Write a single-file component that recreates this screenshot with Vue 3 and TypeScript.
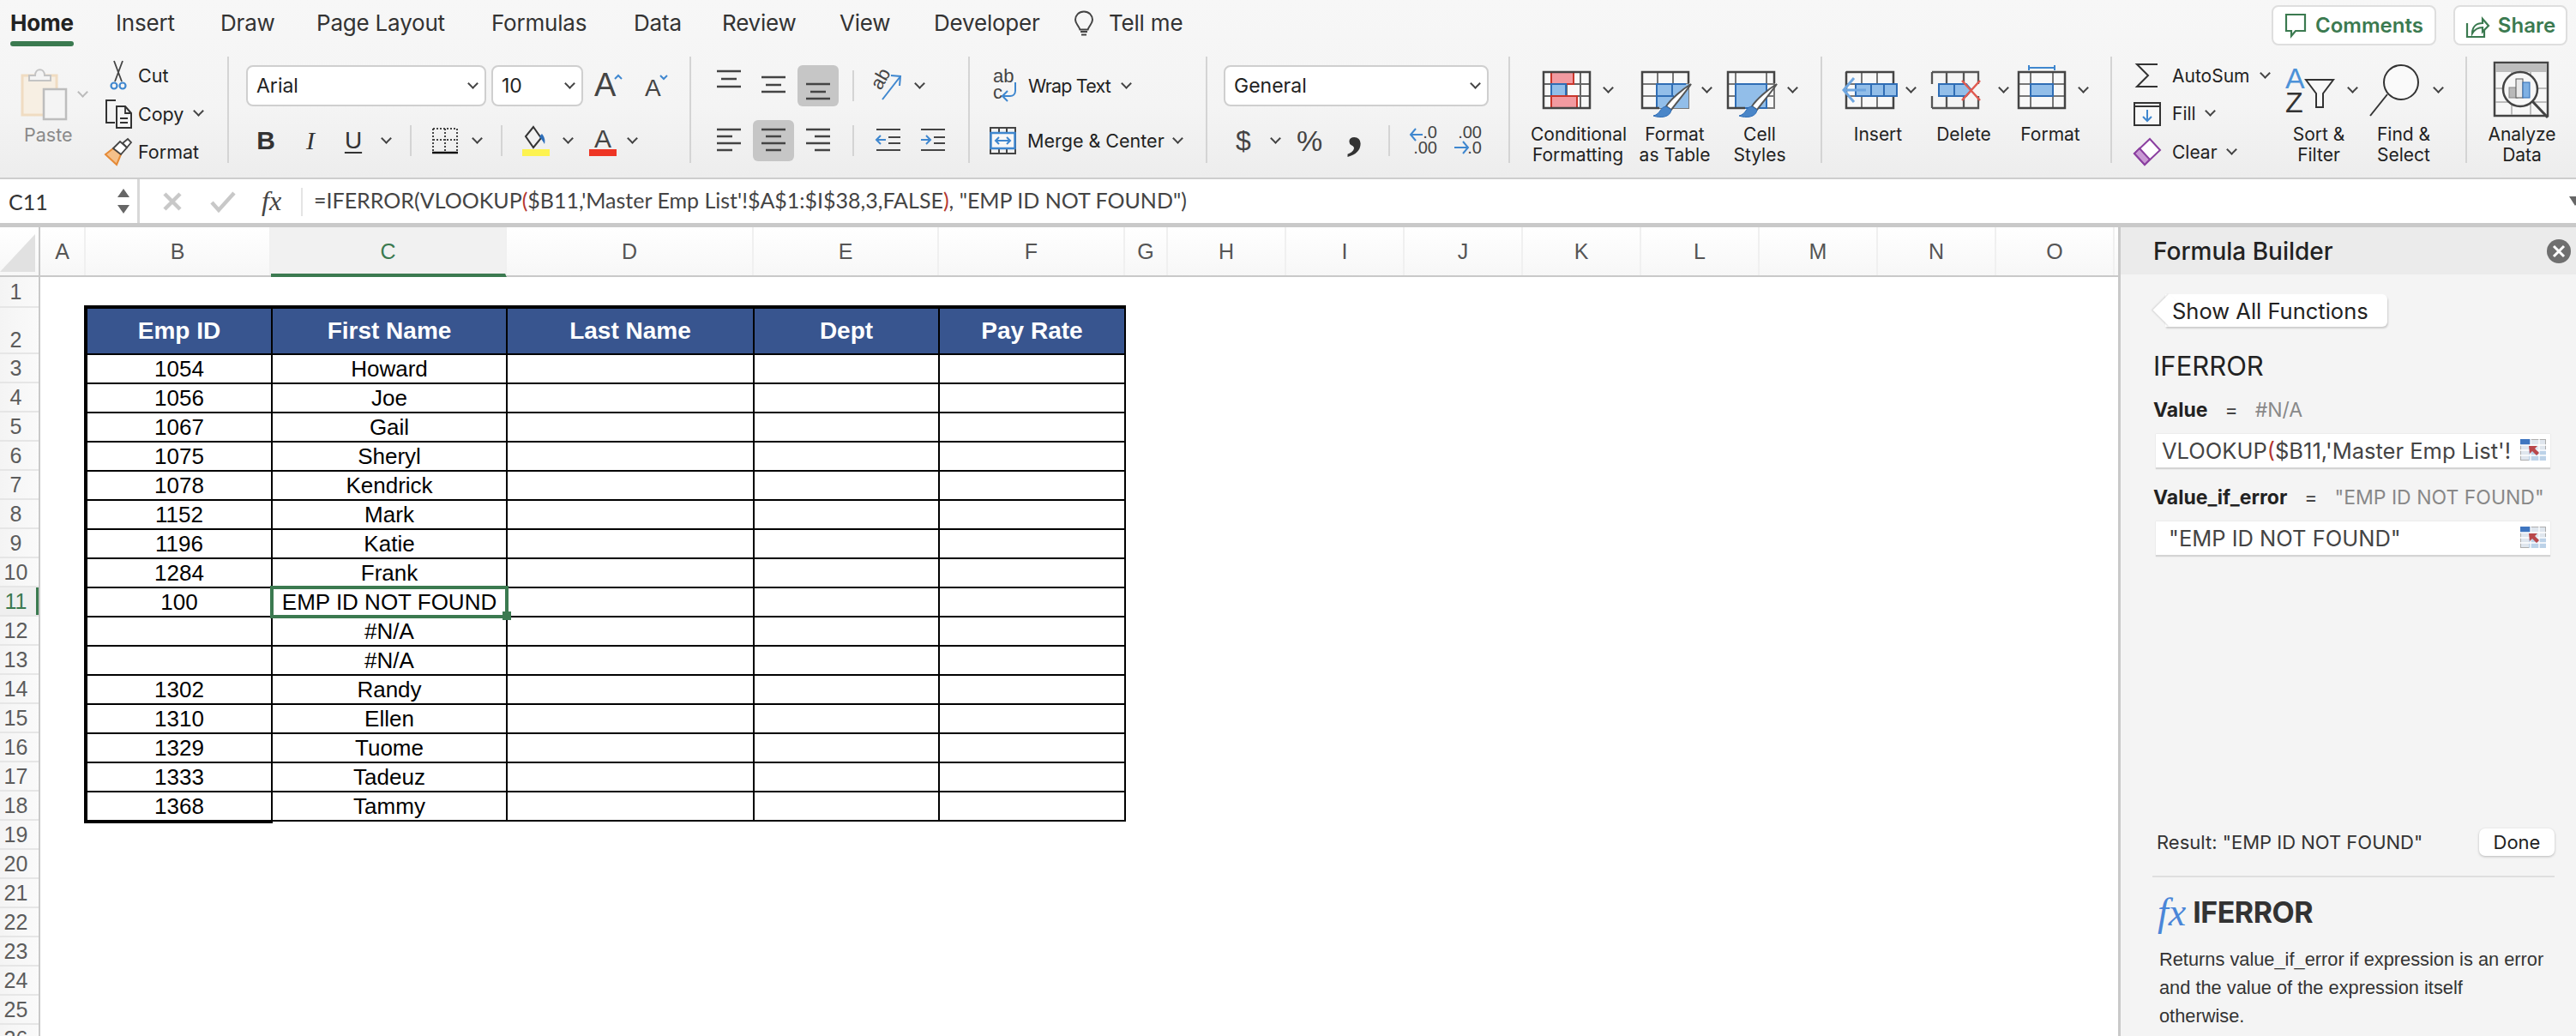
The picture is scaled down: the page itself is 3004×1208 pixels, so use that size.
<script setup lang="ts">
const tabs = ["Home", "Insert", "Draw", "Page Layout", "Formulas", "Data", "Review", "View", "Developer"];

const columns = [
  { name: "A", width: 53 },
  { name: "B", width: 216 },
  { name: "C", width: 275, active: true },
  { name: "D", width: 288 },
  { name: "E", width: 216 },
  { name: "F", width: 217 },
  { name: "G", width: 50 },
  { name: "H", width: 138 },
  { name: "I", width: 138 },
  { name: "J", width: 138 },
  { name: "K", width: 138 },
  { name: "L", width: 138 },
  { name: "M", width: 138 },
  { name: "N", width: 138 },
  { name: "O", width: 138 },
];

const rowNumbers = Array.from({ length: 26 }, (_, i) => i + 1);

const headers = ["Emp ID", "First Name", "Last Name", "Dept", "Pay Rate"];
const employees: [string, string][] = [
  ["1054", "Howard"],
  ["1056", "Joe"],
  ["1067", "Gail"],
  ["1075", "Sheryl"],
  ["1078", "Kendrick"],
  ["1152", "Mark"],
  ["1196", "Katie"],
  ["1284", "Frank"],
  ["100", "EMP ID NOT FOUND"],
  ["", "#N/A"],
  ["", "#N/A"],
  ["1302", "Randy"],
  ["1310", "Ellen"],
  ["1329", "Tuome"],
  ["1333", "Tadeuz"],
  ["1368", "Tammy"],
];
</script>

<template>
  <div class="app">
    <header class="ribbon">
      <div class="tabs">
        <div class="tab-grid">
          <div v-for="(t, i) in tabs" :key="t" class="tab">
            <span class="tab-label" :class="{ current: i === 0 }">{{ t }}</span>
          </div>
          <svg class="bulb" width="24" height="30" viewBox="0 0 24 30">
            <path d="M12 1.500c-6 0-10 4.400-10 9.600 0 4.400 4 6.900 5.400 11.400h9.200C18 18 22 15.500 22 11.100 22 5.900 18 1.500 12 1.500z" fill="none" stroke="#444" stroke-width="2" />
            <path d="M8 25h8M9 28.500h6" stroke="#444" stroke-width="2" fill="none" />
          </svg>
          <div class="tab"><span class="tab-label">Tell me</span></div>
        </div>
        <div class="top-actions">
          <button class="top-btn comments">
            <svg width="26" height="30" viewBox="0 0 26 30">
              <path d="M2 2h22v19H13l-5 6v-6H2z" fill="none" stroke="#3b7a50" stroke-width="2.200" />
            </svg>
            Comments
          </button>
          <button class="top-btn share">
            <svg width="28" height="30" viewBox="0 0 28 30">
              <path d="M2 12v16h20v-8" fill="none" stroke="#3b7a50" stroke-width="2.200" />
              <path d="M8 24c0-8 5-12 12-12V7l7 8-7 7v-5c-6 0-9 2-12 7z" fill="none" stroke="#3b7a50" stroke-width="2.200" />
            </svg>
            Share
          </button>
        </div>
      </div>

      <div class="groups">
        <!-- clipboard -->
        <section class="group g-clip">
          <div class="paste">
            <div class="paste-top">
              <svg width="56" height="60" viewBox="0 0 56 60">
                <rect x="2" y="8" width="40" height="46" fill="#f7efe3" stroke="#f0dcc2" stroke-width="3" />
                <path d="M10 14V8h7c0-9 11-9 11 0h7v6z" fill="#f4f4f4" stroke="#c4c4c4" stroke-width="2" />
                <rect x="27" y="24" width="26" height="35" fill="#f4f4f4" stroke="#bdbdbd" stroke-width="2.500" />
              </svg>
              <span class="caret faded"></span>
            </div>
            <div class="paste-label">Paste</div>
          </div>
          <div class="clip-list">
            <div class="clip-row">
              <svg width="32" height="36" viewBox="0 0 32 36">
                <path d="M11 1l9 24M21 1l-9 24" stroke="#444" stroke-width="1.800" fill="none" />
                <circle cx="11" cy="30" r="3.500" fill="none" stroke="#3f87cf" stroke-width="2.200" />
                <circle cx="21" cy="30" r="3.500" fill="none" stroke="#3f87cf" stroke-width="2.200" />
              </svg>
              <span>Cut</span>
            </div>
            <div class="clip-row">
              <svg width="32" height="34" viewBox="0 0 32 34">
                <path d="M13 1H2v26h10" fill="none" stroke="#333" stroke-width="2" />
                <path d="M14 8h10l7 8v17H14z" fill="#f6f6f6" stroke="#333" stroke-width="2" />
                <path d="M24 8v8h7M18 22h9M18 27h9" fill="none" stroke="#333" stroke-width="1.800" />
              </svg>
              <span>Copy</span>
              <span class="caret copy-caret"></span>
            </div>
            <div class="clip-row">
              <svg width="32" height="32" viewBox="0 0 32 32">
                <path d="M10 12L1 19l13 12 5-12z" fill="#f4c08a" stroke="#e58a37" stroke-width="2" />
                <path d="M10 12l9 7 7-8-8-7z" fill="#fff" stroke="#444" stroke-width="1.800" />
                <path d="M21 6l6-5 4 4-5 6z" fill="#fff" stroke="#444" stroke-width="1.800" />
              </svg>
              <span>Format</span>
            </div>
          </div>
        </section>
        <i class="sep"></i>

        <!-- font -->
        <section class="group g-font">
          <div class="row-a font-top">
            <div class="select font-name">Arial<span class="caret"></span></div>
            <div class="select font-size">10<span class="caret"></span></div>
            <svg class="grow" width="34" height="44" viewBox="0 0 34 44">
              <text x="0" y="34" class="svg-a big">A</text>
              <path d="M24 14l4-4 4 4" fill="none" stroke="#3f87cf" stroke-width="2" />
            </svg>
            <svg class="shrink" width="30" height="44" viewBox="0 0 30 44">
              <text x="0" y="34" class="svg-a">A</text>
              <path d="M18 10l4 4 4-4" fill="none" stroke="#3f87cf" stroke-width="2" />
            </svg>
          </div>
          <div class="row-b font-bottom">
            <b class="fmt-b">B</b>
            <i class="fmt-i">I</i>
            <u class="fmt-u">U</u>
            <span class="caret"></span>
            <i class="mini-sep"></i>
            <svg width="32" height="32" viewBox="0 0 32 32">
              <path d="M2 2h28M2 2v26M30 2v26M16 2v26M2 15h28" stroke="#444" stroke-width="2" stroke-dasharray="2 2" fill="none" />
              <path d="M1 30h30" stroke="#111" stroke-width="2.500" />
            </svg>
            <span class="caret"></span>
            <i class="mini-sep"></i>
            <svg width="34" height="36" viewBox="0 0 34 36">
              <path d="M14 2l9 13-9 11-9-13z" fill="none" stroke="#333" stroke-width="2" />
              <path d="M24 10c3 4 4 7 3 12-2-4-5-7-6-9z" fill="#2f6fb8" />
              <rect x="1" y="28" width="32" height="8" fill="#fdf350" />
            </svg>
            <span class="caret"></span>
            <svg width="34" height="36" viewBox="0 0 34 36">
              <text x="17" y="26" text-anchor="middle" class="svg-a color-a">A</text>
              <rect x="1" y="28" width="32" height="8" fill="#ee3524" />
            </svg>
            <span class="caret"></span>
          </div>
        </section>
        <i class="sep"></i>

        <!-- alignment -->
        <section class="group g-align">
          <div class="row-a align-grid">
            <svg class="lines" width="28" height="48" viewBox="0 0 28 48"><path d="M0 7h28M5 16h18M0 25h28" /></svg>
            <svg class="lines" width="28" height="48" viewBox="0 0 28 48"><path d="M0 14h28M5 23h18M0 31h28" /></svg>
            <div class="pressed"><svg class="lines" width="28" height="48" viewBox="0 0 28 48"><path d="M0 22h28M5 31h18M0 39h28" /></svg></div>
            <i class="mini-sep"></i>
            <svg width="36" height="44" viewBox="0 0 36 44">
              <text x="3" y="24" transform="rotate(-60 10 20)" class="svg-ab">ab</text>
              <path d="M12 38L33 11M22 10l11 1-1 11" fill="none" stroke="#3f87cf" stroke-width="2" />
            </svg>
            <span class="caret orient-caret"></span>
          </div>
          <div class="row-b align-grid">
            <svg class="lines" width="28" height="48" viewBox="0 0 28 48"><path d="M0 11h28M0 19h18M0 27h28M0 35h18" /></svg>
            <div class="pressed"><svg class="lines" width="28" height="48" viewBox="0 0 28 48"><path d="M0 11h28M5 19h18M0 27h28M5 35h18" /></svg></div>
            <svg class="lines" width="28" height="48" viewBox="0 0 28 48"><path d="M0 11h28M10 19h18M0 27h28M10 35h18" /></svg>
            <i class="mini-sep"></i>
            <svg width="30" height="48" viewBox="0 0 30 48">
              <path d="M2 11h28M16 20h14M16 27h14M2 35h28" stroke="#444" stroke-width="2" fill="none" />
              <path d="M13 23H2M7 18l-5 5 5 5" stroke="#3f87cf" stroke-width="2" fill="none" />
            </svg>
            <svg width="30" height="48" viewBox="0 0 30 48">
              <path d="M1 11h28M16 20h13M16 27h13M1 35h28" stroke="#444" stroke-width="2" fill="none" />
              <path d="M1 23h11M7 18l5 5-5 5" stroke="#3f87cf" stroke-width="2" fill="none" />
            </svg>
          </div>
        </section>
        <i class="sep"></i>

        <!-- wrap and merge -->
        <section class="group g-wrap">
          <div class="row-a wrap-row">
            <svg width="30" height="40" viewBox="0 0 30 40">
              <text x="0" y="16" class="svg-ab">ab</text>
              <text x="0" y="35" class="svg-ab">c</text>
              <path d="M26 16v10c0 4-3 6-6 6h-8M17 26l-6 6 6 6" fill="none" stroke="#3f87cf" stroke-width="2" />
            </svg>
            <span class="wrap-label">Wrap Text</span>
            <span class="caret"></span>
          </div>
          <div class="row-b merge-row">
            <svg width="31" height="32" viewBox="0 0 31 32">
              <path d="M1 1h29v30H1zM11 1v6M20 1v6M11 25v6M20 25v6" fill="none" stroke="#444" stroke-width="2" />
              <rect x="1.500" y="7" width="28" height="18" fill="#f7f7f7" stroke="#3f87cf" stroke-width="2.500" />
              <path d="M7 16h17M11 12l-4 4 4 4M20 12l4 4-4 4" fill="none" stroke="#3f87cf" stroke-width="2" />
            </svg>
            <span class="merge-label">Merge &amp; Center</span>
            <span class="caret"></span>
          </div>
        </section>
        <i class="sep"></i>

        <!-- number -->
        <section class="group g-number">
          <div class="row-a">
            <div class="select number-format">General<span class="caret"></span></div>
          </div>
          <div class="row-b number-grid">
            <span class="num-sym">$</span>
            <span class="caret"></span>
            <span class="num-sym pct">%</span>
            <span class="num-comma">,</span>
            <i class="mini-sep"></i>
            <svg width="34" height="36" viewBox="0 0 34 36">
              <text x="33" y="15" text-anchor="end" class="svg-dec">.0</text>
              <text x="33" y="33" text-anchor="end" class="svg-dec">.00</text>
              <path d="M16 11H2M8 4l-6 7 6 7" fill="none" stroke="#3f87cf" stroke-width="2" />
            </svg>
            <svg width="34" height="36" viewBox="0 0 34 36">
              <text x="33" y="15" text-anchor="end" class="svg-dec">.00</text>
              <text x="33" y="33" text-anchor="end" class="svg-dec">.0</text>
              <path d="M1 26h16M11 19l6 7-6 7" fill="none" stroke="#3f87cf" stroke-width="2" />
            </svg>
          </div>
        </section>
        <i class="sep"></i>

        <!-- styles -->
        <section class="group g-styles">
          <div class="big-btn b-cf">
            <div class="big-top">
              <svg class="big-icon" width="56" height="54" viewBox="0 0 56 54">
                <path d="M1 1h54v42H1zM44 1v42M1 15h54M1 29h54M28 1v42" fill="#f8f8f8" stroke="#666" stroke-width="2" />
                <rect x="10" y="1" width="26" height="14" fill="#f29aa0" stroke="#c9362b" stroke-width="2" />
                <rect x="10" y="15" width="17" height="14" fill="#92bee9" stroke="#2f6db5" stroke-width="2" />
                <rect x="10" y="29" width="30" height="14" fill="#f29aa0" stroke="#c9362b" stroke-width="2" />
                <path d="M1 1h54v42H1z" fill="none" stroke="#444" stroke-width="2.500" />
              </svg>
              <span class="caret"></span>
            </div>
            <div class="big-label">Conditional<br />Formatting</div>
          </div>
          <div class="big-btn b-ft">
            <div class="big-top">
              <svg class="big-icon" width="60" height="54" viewBox="0 0 60 54">
                <path d="M1 1h54v42H1zM19 1v42M37 1v42M1 15h54M1 29h54" fill="#f8f8f8" stroke="#777" stroke-width="2" />
                <rect x="18" y="15" width="37" height="28" fill="#92bee9" />
                <path d="M18 43V15h34M36 15v14M18 29h20" fill="none" stroke="#2f6db5" stroke-width="2" />
                <path d="M55 14V1H1v42h20" fill="none" stroke="#444" stroke-width="2.500" />
                <path d="M58 15C52 24 40 38 35 45l-6-4C34 33 48 21 58 15z" fill="#fff" stroke="#555" stroke-width="2" />
                <path d="M29 41c-8 1-6 9-15 11 8 3 20 2 21-7z" fill="#4a86c8" stroke="#2f6db5" stroke-width="1" />
              </svg>
              <span class="caret narrow-caret"></span>
            </div>
            <div class="big-label">Format<br />as Table</div>
          </div>
          <div class="big-btn b-cs">
            <div class="big-top">
              <svg class="big-icon" width="60" height="54" viewBox="0 0 60 54">
                <path d="M1 1h54v42H1zM10 1v42M46 1v42M1 15h54M1 29h54" fill="#f8f8f8" stroke="#777" stroke-width="2" />
                <rect x="10" y="15" width="36" height="28" fill="#92bee9" stroke="#2f6db5" stroke-width="2" />
                <path d="M55 14V1H1v42h20" fill="none" stroke="#444" stroke-width="2.500" />
                <path d="M58 15C52 24 40 38 35 45l-6-4C34 33 48 21 58 15z" fill="#fff" stroke="#555" stroke-width="2" />
                <path d="M29 41c-8 1-6 9-15 11 8 3 20 2 21-7z" fill="#4a86c8" stroke="#2f6db5" stroke-width="1" />
              </svg>
              <span class="caret narrow-caret"></span>
            </div>
            <div class="big-label">Cell<br />Styles</div>
          </div>
        </section>
        <i class="sep"></i>

        <!-- cells -->
        <section class="group g-cells">
          <div class="big-btn b-ins">
            <div class="big-top">
              <svg class="big-icon" width="66" height="44" viewBox="0 0 66 44">
                <path d="M5 1h55v42H5zM23 1v42M41 1v42M5 15h55M5 29h55" fill="#f8f8f8" stroke="#777" stroke-width="2" />
                <path d="M5 1h55v14M5 1v42h55V29" fill="none" stroke="#444" stroke-width="2.500" />
                <rect x="16" y="15" width="48" height="14" fill="#92bee9" stroke="#2f6db5" stroke-width="2" />
                <path d="M34 15v14M49 15v14" stroke="#2f6db5" stroke-width="2" />
                <path d="M28 22H2M14 8L2 22l12 14" fill="none" stroke="#6ea6e0" stroke-width="3" />
              </svg>
              <span class="caret"></span>
            </div>
            <div class="big-label">Insert</div>
          </div>
          <div class="big-btn b-del">
            <div class="big-top">
              <svg class="big-icon" width="60" height="44" viewBox="0 0 60 44">
                <path d="M1 1h54v14M1 43h54V29M1 1v14M1 29v14M18 1v14M38 1v14M18 29v14M38 29v14" fill="none" stroke="#555" stroke-width="2.300" />
                <path d="M9 15h32l6 7-6 7H9z" fill="#92bee9" stroke="#2f6db5" stroke-width="2" />
                <path d="M27 15v14" stroke="#2f6db5" stroke-width="2" />
                <path d="M36 11l21 23M57 11L36 34" stroke="#e15a50" stroke-width="2.500" />
              </svg>
              <span class="caret narrow-caret"></span>
            </div>
            <div class="big-label">Delete</div>
          </div>
          <div class="big-btn b-fmt">
            <div class="big-top">
              <svg class="big-icon up" width="56" height="54" viewBox="0 0 56 54">
                <path d="M13 3v6M43 3v6M13 6h30" stroke="#3f87cf" stroke-width="2" fill="none" />
                <path d="M1 11h54v42H1zM15 11v42M41 11v42M1 25h54M1 39h54" fill="#f8f8f8" stroke="#777" stroke-width="2" />
                <path d="M1 11h54v42H1z" fill="none" stroke="#444" stroke-width="2.500" />
                <rect x="15" y="25" width="26" height="14" fill="#92bee9" stroke="#2f6db5" stroke-width="2" />
              </svg>
              <span class="caret"></span>
            </div>
            <div class="big-label">Format</div>
          </div>
        </section>
        <i class="sep"></i>

        <!-- editing -->
        <section class="group g-edit">
          <div class="edit-list">
            <div class="edit-row">
              <svg width="32" height="30" viewBox="0 0 32 30">
                <path d="M28 2H4l13 13L4 28h24" fill="none" stroke="#333" stroke-width="2" />
              </svg>
              <span class="edit-text autosum">AutoSum</span>
              <span class="caret"></span>
            </div>
            <div class="edit-row">
              <svg width="32" height="28" viewBox="0 0 32 28">
                <path d="M1 1h30v26H1zM1 5h30" fill="#f8f8f8" stroke="#333" stroke-width="2" />
                <path d="M16 9v13M11 17l5 5 5-5" fill="none" stroke="#3f87cf" stroke-width="2" />
              </svg>
              <span class="edit-text fill">Fill</span>
              <span class="caret"></span>
            </div>
            <div class="edit-row">
              <svg width="32" height="32" viewBox="0 0 32 32">
                <path d="M19 1l12 13-18 17L1 18z" fill="#fff" stroke="#8b3fa0" stroke-width="2" />
                <path d="M7 12l12 13-6 6L1 18z" fill="#c99ad4" stroke="#8b3fa0" stroke-width="2" />
              </svg>
              <span class="edit-text clear">Clear</span>
              <span class="caret"></span>
            </div>
          </div>
          <div class="big-btn b-sort">
            <div class="big-top">
              <svg class="big-icon sort-icon" width="58" height="56" viewBox="0 0 58 56">
                <text x="0" y="26" class="svg-sort blue">A</text>
                <text x="0" y="54" class="svg-sort">Z</text>
                <path d="M24 16h32L44 32v16h-8V32z" fill="#f8f8f8" stroke="#333" stroke-width="2" />
              </svg>
              <span class="caret"></span>
            </div>
            <div class="big-label">Sort &amp;<br />Filter</div>
          </div>
          <div class="big-btn b-find">
            <div class="big-top">
              <svg class="big-icon find-icon" width="62" height="62" viewBox="0 0 62 62">
                <circle cx="38" cy="21" r="20" fill="#fafafa" stroke="#333" stroke-width="2" />
                <path d="M22 35L2 60" stroke="#333" stroke-width="2" />
              </svg>
              <span class="caret"></span>
            </div>
            <div class="big-label">Find &amp;<br />Select</div>
          </div>
        </section>
        <i class="sep"></i>

        <section class="group g-analyze">
          <div class="big-btn b-an">
            <div class="big-top">
              <svg class="big-icon analyze-icon" width="66" height="66" viewBox="0 0 66 66">
                <rect x="1" y="1" width="62" height="62" fill="#f7f7f7" stroke="#444" stroke-width="2.500" />
                <rect x="2" y="2" width="60" height="10" fill="#bdbdbd" />
                <path d="M2 31h60M2 47h60M21 12v50M43 12v50" stroke="#aaa" stroke-width="1.500" />
                <circle cx="31" cy="32" r="20" fill="#f7f7f7" stroke="#444" stroke-width="2.500" />
                <rect x="18" y="30" width="10" height="12" fill="#b9b9b9" stroke="#888" />
                <rect x="26" y="20" width="8" height="22" fill="#e9e9e9" stroke="#555" />
                <rect x="34" y="24" width="8" height="18" fill="#7fb0e3" stroke="#2f6db5" />
                <path d="M45 46l18 19" stroke="#444" stroke-width="3" />
              </svg>
            </div>
            <div class="big-label">Analyze<br />Data</div>
          </div>
        </section>
      </div>
    </header>

    <div class="formula-bar">
      <div class="name-box">
        <span>C11</span>
        <span class="spin"><i class="up-arrow"></i><i class="down-arrow"></i></span>
      </div>
      <div class="fx-tools">
        <svg width="24" height="24" viewBox="0 0 24 24"><path d="M3 3l18 18M21 3L3 21" stroke="#c8c8c8" stroke-width="4.500" /></svg>
        <svg width="30" height="24" viewBox="0 0 30 24"><path d="M2 13l8 9L28 2" fill="none" stroke="#c8c8c8" stroke-width="4.500" /></svg>
        <span class="fx">fx</span>
      </div>
      <div class="formula-text">=IFERROR(VLOOKUP<span class="paren">(</span>$B11,'Master Emp List'!$A$1:$I$38,3,FALSE<span class="paren">)</span>, "EMP ID NOT FOUND")</div>
      <i class="expand"></i>
    </div>

    <main class="workspace">
      <div class="sheet">
        <div class="col-heads">
          <div class="corner"><i></i></div>
          <div
            v-for="c in columns"
            :key="c.name"
            class="col-head"
            :class="{ active: c.active }"
            :style="{ width: c.width + 'px' }"
          >{{ c.name }}</div>
        </div>
        <div class="sheet-body">
          <div class="row-heads">
            <div
              v-for="n in rowNumbers"
              :key="n"
              class="row-head"
              :class="{ tall: n === 2, short: n === 1, active: n === 11 }"
            >{{ n }}</div>
          </div>
          <div class="cells">
            <div class="table">
              <div v-for="h in headers" :key="h" class="th">{{ h }}</div>
              <template v-for="(e, i) in employees" :key="i">
                <div class="td" :class="{ last: i === employees.length - 1 }">{{ e[0] }}</div>
                <div class="td" :class="{ selected: i === 8 }">
                  {{ e[1] }}
                  <i v-if="i === 8" class="fill-handle"></i>
                </div>
                <div class="td"></div>
                <div class="td"></div>
                <div class="td"></div>
              </template>
            </div>
          </div>
        </div>
      </div>

      <aside class="panel">
        <div class="panel-head">
          <span>Formula Builder</span>
          <span class="close">
            <svg width="16" height="16" viewBox="0 0 16 16"><path d="M2 2l12 12M14 2L2 14" stroke="#fff" stroke-width="3" /></svg>
          </span>
        </div>
        <div class="panel-body">
          <button class="back-btn">Show All Functions</button>
          <div class="fn-name">IFERROR</div>
          <div class="arg-row"><b>Value</b><span class="eq">=</span><span class="arg-val">#N/A</span></div>
          <div class="arg-input">
            <span class="arg-text">VLOOKUP<span class="paren">(</span>$B11,'Master Emp List'!</span>
            <svg class="range" width="30" height="25" viewBox="0 0 30 25">
              <rect x="0.500" y="0.500" width="29" height="24" fill="#dfe6ee" stroke="#aeaeae" />
              <rect x="10" y="12" width="20" height="13" fill="#bcd2e8" />
              <rect width="12" height="7" fill="#3f76c0" />
              <path d="M0 7h30M0 13h30M0 19h30M12 0v25M22 0v25" stroke="#fff" stroke-width="1.300" />
              <path d="M10 8h10l-3 3 5 5-3 3-5-5-3 3z" fill="#b9474a" />
            </svg>
          </div>
          <div class="arg-row second"><b>Value_if_error</b><span class="eq">=</span><span class="arg-val">"EMP ID NOT FOUND"</span></div>
          <div class="arg-input">
            <span class="arg-text indent">"EMP ID NOT FOUND"</span>
            <svg class="range" width="30" height="25" viewBox="0 0 30 25">
              <rect x="0.500" y="0.500" width="29" height="24" fill="#dfe6ee" stroke="#aeaeae" />
              <rect x="10" y="12" width="20" height="13" fill="#bcd2e8" />
              <rect width="12" height="7" fill="#3f76c0" />
              <path d="M0 7h30M0 13h30M0 19h30M12 0v25M22 0v25" stroke="#fff" stroke-width="1.300" />
              <path d="M10 8h10l-3 3 5 5-3 3-5-5-3 3z" fill="#b9474a" />
            </svg>
          </div>
          <div class="result-row">
            <span>Result: "EMP ID NOT FOUND"</span>
            <button class="done">Done</button>
          </div>
          <div class="divider"></div>
          <div class="help-title"><span class="help-fx">fx</span><b>IFERROR</b></div>
          <p class="help-text">Returns value_if_error if expression is an error and the value of the expression itself otherwise.</p>
        </div>
      </aside>
    </main>
  </div>
</template>

<style>
html,
body {
  margin: 0;
  overflow: hidden;
  background: #fff;
}
</style>

<style scoped>
* {
  box-sizing: border-box;
}
i {
  font-style: normal;
}
svg {
  overflow: visible;
}
button {
  font: inherit;
  padding: 0;
  cursor: default;
}
.app {
  width: 3004px;
  height: 1208px;
  overflow: hidden;
  font-family: Inter, "Liberation Sans", sans-serif;
  color: #222;
  background: #fff;
}

/* ribbon */
.ribbon {
  height: 207px;
  background: linear-gradient(#f7f7f7, #f4f4f4 60%, #ededed);
}
.tabs {
  height: 66px;
  display: flex;
  justify-content: space-between;
}
.tab-grid {
  display: grid;
  grid-template-columns: 123px 122px 112px 204px 166px 103px 137px 110px 163px 41px auto;
  padding-left: 12px;
  height: 54px;
  align-items: center;
}
.tab {
  display: flex;
  height: 54px;
  align-items: center;
}
.tab-label {
  font-size: 26px;
  letter-spacing: -0.2px;
  line-height: 54px;
  height: 54px;
  position: relative;
  color: #333;
}
.tab-label.current {
  font-weight: 700;
  color: #222;
}
.tab-label.current::after {
  content: "";
  position: absolute;
  left: 0;
  right: 0;
  bottom: 0;
  height: 6px;
  border-radius: 3px;
  background: #3b7a50;
}
.top-actions {
  display: flex;
  gap: 20px;
  padding: 6px 10px 0 0;
}
.top-btn {
  height: 47px;
  display: flex;
  align-items: center;
  justify-content: center;
  gap: 10px;
  background: #fff;
  border: 2px solid #dedede;
  border-radius: 8px;
  color: #3b7a50;
  font-size: 24px;
  font-weight: 600;
}
.comments {
  width: 192px;
}
.share {
  width: 133px;
}

.groups {
  display: flex;
  height: 141px;
}
.group {
  height: 141px;
  font-size: 21.500px;
  flex: none;
}
.sep {
  display: block;
  flex: none;
  width: 2px;
  height: 124px;
  background: #d4d4d4;
}
.mini-sep {
  display: block;
  justify-self: center;
  width: 2px;
  height: 36px;
  background: #d4d4d4;
}
.caret {
  display: block;
  flex: none;
  position: relative;
  width: 12px;
  height: 8px;
  justify-self: center;
}
.caret::after {
  content: "";
  position: absolute;
  left: 1.500px;
  top: -3.500px;
  width: 9px;
  height: 9px;
  box-sizing: border-box;
  border-right: 2.500px solid #444;
  border-bottom: 2.500px solid #444;
  transform: rotate(45deg);
}
.caret.faded::after {
  border-color: #bbb;
}

.row-a {
  margin-top: 10px;
  height: 48px;
}
.row-b {
  margin-top: 16px;
  height: 48px;
}
.row-a,
.row-b {
  align-items: center;
}

/* clipboard */
.g-clip {
  width: 265px;
  display: flex;
  padding-left: 24px;
}
.paste {
  width: 98px;
  flex: none;
}
.paste-top {
  display: flex;
  align-items: center;
  height: 78px;
  padding-top: 10px;
  gap: 10px;
}
.paste-label {
  color: #8a8a8a;
  padding-left: 4px;
  line-height: 26px;
}
.clip-list {
  display: flex;
  flex-direction: column;
}
.clip-row {
  display: flex;
  align-items: center;
  height: 44.500px;
  gap: 7px;
}
.copy-caret {
  margin-left: 4px;
}

/* font */
.g-font {
  width: 537px;
  padding-left: 20px;
}
.font-top {
  display: flex;
  gap: 6px;
}
.select {
  height: 48px;
  background: #fff;
  border: 2px solid #cfcfcf;
  border-radius: 8px;
  display: flex;
  align-items: center;
  justify-content: space-between;
  padding: 0 8px 0 10px;
  font-size: 23px;
  color: #222;
}
.font-name {
  width: 280px;
}
.font-size {
  width: 107px;
}
.grow {
  margin-left: 7px;
}
.shrink {
  margin-left: 19px;
}
.svg-a {
  font-family: "Liberation Sans", sans-serif;
  font-size: 28px;
  fill: #444;
}
.svg-a.big {
  font-size: 38px;
}
.svg-a.color-a {
  font-size: 30px;
}
.font-bottom {
  display: grid;
  grid-template-columns: 46px 58px 42px 34px 24px 56px 18px 40px 40px 34px 48px 20px;
  justify-items: center;
}
.fmt-b,
.fmt-i,
.fmt-u {
  font-family: "Liberation Sans", sans-serif;
  font-size: 30px;
  color: #333;
}
.fmt-i {
  font-family: "Liberation Serif", serif;
  font-style: italic;
}
.fmt-u {
  font-size: 28px;
  text-underline-offset: 4px;
}

/* alignment */
.g-align {
  width: 323px;
  padding-left: 20px;
}
.align-grid {
  display: grid;
  grid-template-columns: 48px 56px 48px 34px 46px 60px;
  justify-items: center;
}
.lines {
  display: block;
}
.lines path {
  stroke: #444;
  stroke-width: 2.300;
  fill: none;
}
.pressed {
  width: 48px;
  height: 48px;
  background: #c6c6c6;
  border-radius: 6px;
  display: flex;
  justify-content: center;
}
.svg-ab {
  font-family: "Liberation Sans", sans-serif;
  font-size: 22px;
  fill: #444;
}
.orient-caret {
  justify-self: start;
  margin-left: 8px;
}

/* wrap and merge */
.g-wrap {
  width: 275px;
}
.wrap-row,
.merge-row {
  display: flex;
}
.wrap-row {
  padding-left: 27px;
}
.merge-row {
  padding-left: 23px;
}
.wrap-label {
  width: 108px;
  margin-left: 11px;
  letter-spacing: -0.8px;
  white-space: nowrap;
}
.merge-label {
  width: 169px;
  margin-left: 13px;
  white-space: nowrap;
}

/* number */
.g-number {
  width: 351px;
  padding-left: 19px;
}
.number-format {
  width: 309px;
}
.number-grid {
  display: grid;
  grid-template-columns: 46px 28px 52px 54px 26px 54px 50px;
  justify-items: center;
}
.num-sym {
  font-size: 32px;
  font-family: "Liberation Sans", sans-serif;
  color: #444;
}
.num-sym.pct {
  font-size: 34px;
}
.num-comma {
  font-family: "Liberation Serif", serif;
  font-size: 76px;
  font-weight: 700;
  color: #333;
  line-height: 48px;
  height: 48px;
  margin-top: -38px;
}
.svg-dec {
  font-family: "Liberation Sans", sans-serif;
  font-size: 20px;
  fill: #444;
}

/* big buttons */
.g-styles {
  width: 362px;
  display: flex;
  padding-left: 24px;
}
.g-cells {
  width: 336px;
  display: flex;
  padding-left: 15px;
}
.g-edit {
  width: 412px;
  display: flex;
  padding-left: 25px;
}
.g-analyze {
  width: 128px;
}
.big-btn {
  flex: none;
  display: flex;
  flex-direction: column;
}
.big-top {
  display: flex;
  align-items: center;
  height: 79px;
}
.big-icon {
  align-self: flex-start;
  margin-top: 17px;
  margin-right: 14px;
  flex: none;
}
.big-icon.up {
  margin-top: 7px;
}
.big-label {
  text-align: center;
  line-height: 24px;
  font-size: 21px;
  white-space: nowrap;
}
.b-cf {
  width: 110px;
  margin-right: 3px;
}
.b-cf .big-top {
  padding-left: 14px;
}
.b-ft {
  width: 110px;
}
.b-ft .big-top {
  padding-left: 16px;
}
.b-cs {
  width: 88px;
}
.b-cs .big-top {
  padding-left: 6px;
}
.narrow-caret {
  margin-left: -4px;
}
.b-ins {
  width: 100px;
}
.b-ins .big-top {
  padding-left: 8px;
}
.b-ins .big-icon {
  margin-right: 8px;
}
.b-del {
  width: 100px;
}
.b-del .big-top {
  padding-left: 12px;
}
.b-del .narrow-caret {
  margin-left: 4px;
}
.b-fmt {
  width: 100px;
  margin-left: 1px;
}
.b-fmt .big-top {
  padding-left: 12px;
}

/* editing */
.edit-list {
  width: 166px;
  flex: none;
  display: flex;
  flex-direction: column;
}
.edit-row {
  display: flex;
  align-items: center;
  height: 44.500px;
}
.edit-text {
  margin-left: 13px;
  white-space: nowrap;
  font-size: 21px;
}
.autosum {
  width: 102px;
}
.fill {
  width: 38px;
}
.clear {
  width: 63px;
}
.b-sort {
  width: 100px;
}
.b-sort .big-top {
  padding-left: 11px;
}
.sort-icon {
  margin-top: 11px;
  margin-right: 14px;
}
.svg-sort {
  font-family: "Liberation Sans", sans-serif;
  font-size: 34px;
  fill: #333;
}
.svg-sort.blue {
  fill: #4d92d8;
}
.b-find {
  width: 100px;
  margin-left: -1px;
}
.b-find .big-top {
  padding-left: 9px;
}
.find-icon {
  margin-top: 9px;
  margin-right: 13px;
}
.b-an {
  width: 128px;
}
.b-an .big-top {
  justify-content: center;
}
.analyze-icon {
  margin: 6px 0 0;
}

/* formula bar */
.formula-bar {
  height: 58px;
  display: flex;
  align-items: stretch;
  background: #fff;
  border-top: 2px solid #cdcdcd;
  border-bottom: 5px solid #c9c9c9;
  position: relative;
}
.name-box {
  width: 163px;
  flex: none;
  display: flex;
  align-items: center;
  justify-content: space-between;
  padding: 0 10px;
  border-right: 3px solid #d8d8d8;
  font-family: Lato, sans-serif;
  font-size: 25px;
  color: #333;
}
.spin {
  display: flex;
  flex-direction: column;
  gap: 9px;
  margin-right: -1px;
}
.up-arrow,
.down-arrow {
  display: block;
  width: 0;
  height: 0;
  border-left: 7px solid transparent;
  border-right: 7px solid transparent;
}
.up-arrow {
  border-bottom: 10px solid #666;
}
.down-arrow {
  border-top: 10px solid #666;
}
.fx-tools {
  width: 192px;
  flex: none;
  display: flex;
  align-items: center;
  gap: 32px;
  padding-left: 26px;
  position: relative;
}
.fx-tools::after {
  content: "";
  position: absolute;
  right: 2px;
  top: 10px;
  bottom: 8px;
  width: 2px;
  background: #e4e4e4;
}
.fx {
  font-family: "Liberation Serif", serif;
  font-style: italic;
  font-size: 32px;
  color: #444;
  margin-left: -2px;
}
.formula-text {
  padding-left: 11px;
  font-family: Lato, sans-serif;
  font-size: 25px;
  line-height: 48px;
  color: #444;
  white-space: nowrap;
}
.paren {
  color: #b5372f;
}
.expand {
  position: absolute;
  right: -6px;
  top: 20px;
  width: 0;
  height: 0;
  border-left: 7px solid transparent;
  border-right: 7px solid transparent;
  border-top: 11px solid #666;
}

/* sheet */
.workspace {
  display: flex;
  height: 943px;
}
.sheet {
  width: 2470px;
  flex: none;
  overflow: hidden;
}
.col-heads {
  display: flex;
  height: 58px;
  background: linear-gradient(#fff, #f7f7f7);
  border-bottom: 2px solid #c9c9c9;
}
.corner {
  width: 47px;
  flex: none;
  border-right: 2px solid #c9c9c9;
  position: relative;
}
.corner i {
  position: absolute;
  right: 4px;
  bottom: 4px;
  width: 0;
  height: 0;
  border-left: 41px solid transparent;
  border-bottom: 44px solid #e1e1e1;
}
.col-head {
  flex: none;
  text-align: center;
  line-height: 56px;
  font-family: "Liberation Sans", sans-serif;
  font-size: 25px;
  color: #555;
  border-right: 2px solid #f0f0f0;
}
.col-head.active {
  background: #f1f1f1;
  color: #3b7a50;
  border-bottom: 4px solid #3b7a50;
  height: 58px;
}
.sheet-body {
  display: flex;
}
.row-heads {
  width: 47px;
  flex: none;
  border-right: 2px solid #c9c9c9;
  background: linear-gradient(90deg, #f4f4f4, #fafafa);
}
.row-head {
  height: 34px;
  display: flex;
  align-items: center;
  justify-content: center;
  padding-right: 8px;
  border-bottom: 2px solid #e6e6e6;
  font-family: "Liberation Sans", sans-serif;
  font-size: 25px;
  color: #5c5c5c;
}
.row-head.short {
  height: 36px;
}
.row-head.tall {
  height: 54px;
  align-items: flex-end;
}
.row-head.active {
  color: #3b7a50;
  background: #efefef;
  box-shadow: inset -3px 0 0 #3b7a50;
}
.cells {
  flex: 1;
  padding: 33px 0 0 51px;
  background: #fff;
}
.table {
  display: grid;
  width: 1215px;
  grid-template-columns: 214px 272px 286px 214px 215px;
  grid-template-rows: 52px repeat(16, 32px);
  gap: 2px;
  padding: 4px 2px 2px 4px;
  background: #000;
  font-family: "Liberation Sans", sans-serif;
}
.th {
  background: #38558f;
  color: #fff;
  font-size: 28px;
  font-weight: 700;
  display: flex;
  align-items: center;
  justify-content: center;
}
.td {
  background: #fff;
  color: #000;
  font-size: 26px;
  display: flex;
  align-items: center;
  justify-content: center;
  position: relative;
}
.td.last::after {
  content: "";
  position: absolute;
  left: -4px;
  right: -2px;
  bottom: -4px;
  height: 4px;
  background: #000;
}
.td.selected {
  z-index: 1;
}
.td.selected::before {
  content: "";
  position: absolute;
  left: -3px;
  right: -3px;
  top: -3px;
  bottom: -3px;
  border: 4px solid #3b7a50;
}
.fill-handle {
  position: absolute;
  right: -6px;
  bottom: -5px;
  width: 10px;
  height: 10px;
  background: #3b7a50;
}

/* formula builder */
.panel {
  width: 534px;
  flex: none;
  border-left: 3px solid #c9c9c9;
  background: #f4f4f4;
}
.panel-head {
  height: 55px;
  background: #ebebeb;
  display: flex;
  align-items: center;
  justify-content: space-between;
  padding: 0 6px 0 38px;
  font-size: 28px;
  font-weight: 500;
  color: #222;
}
.close {
  width: 28px;
  height: 28px;
  border-radius: 50%;
  background: #6f6f6f;
  display: flex;
  align-items: center;
  justify-content: center;
}
.panel-body {
  padding: 23px 0 0 38px;
}
.back-btn {
  display: block;
  width: 259px;
  height: 38px;
  margin-left: 14px;
  background: #fff;
  border: 0;
  border-radius: 0 6px 6px 0;
  box-shadow: 1px 2px 2px rgba(0, 0, 0, 0.16);
  position: relative;
  isolation: isolate;
  font-size: 25.500px;
  text-align: left;
  padding-left: 8px;
  color: #222;
}
.back-btn::before {
  content: "";
  position: absolute;
  left: -9px;
  top: 5px;
  width: 27px;
  height: 27px;
  background: #fff;
  transform: rotate(45deg);
  box-shadow: -1px 1px 2px rgba(0, 0, 0, 0.14);
  z-index: -1;
}
.fn-name {
  margin-top: 26px;
  line-height: 40px;
  font-size: 31px;
  color: #222;
}
.arg-row {
  margin-top: 16px;
  display: flex;
  align-items: center;
  height: 30px;
  font-size: 23px;
}
.arg-row.second {
  margin-top: 18px;
}
.arg-row b {
  font-weight: 700;
}
.eq {
  margin: 0 20px;
  color: #444;
}
.arg-val {
  color: #888;
  white-space: nowrap;
}
.arg-input {
  margin-top: 13px;
  margin-left: 3px;
  width: 460px;
  height: 41px;
  background: #fff;
  border-bottom: 2px solid #d4d4d4;
  box-shadow: 0 0 1px rgba(0, 0, 0, 0.2);
  display: flex;
  align-items: center;
  justify-content: space-between;
  padding: 0 5px 0 7px;
  font-size: 25.500px;
  color: #444;
  white-space: nowrap;
}
.arg-text {
  width: 418px;
  overflow: hidden;
}
.arg-text.indent {
  padding-left: 8px;
}
.range {
  flex: none;
  margin-top: -2px;
}
.result-row {
  margin-top: 317px;
  width: 464px;
  margin-left: 4px;
  display: flex;
  align-items: center;
  justify-content: space-between;
  height: 32px;
  font-size: 22px;
  color: #333;
}
.done {
  width: 88px;
  height: 32px;
  background: #fff;
  border: 0;
  border-radius: 7px;
  box-shadow: 0 1px 3px rgba(0, 0, 0, 0.25);
  font-size: 22px;
  color: #222;
}
.divider {
  margin-top: 23px;
  height: 2px;
  width: 469px;
  margin-left: -1px;
  background: #dfdfdf;
}
.help-title {
  margin-top: 20px;
  display: flex;
  align-items: center;
  gap: 8px;
  height: 40px;
  padding-left: 5px;
  font-size: 34px;
  color: #333;
}
.help-title b {
  font-weight: 700;
  letter-spacing: -0.5px;
}
.help-fx {
  font-family: "Liberation Serif", serif;
  font-style: italic;
  font-size: 46px;
  color: #4a86d8;
}
.help-text {
  margin: 19px 0 0 7px;
  width: 452px;
  font-family: "Liberation Sans", sans-serif;
  font-size: 21.800px;
  line-height: 33px;
  color: #333;
}
</style>
